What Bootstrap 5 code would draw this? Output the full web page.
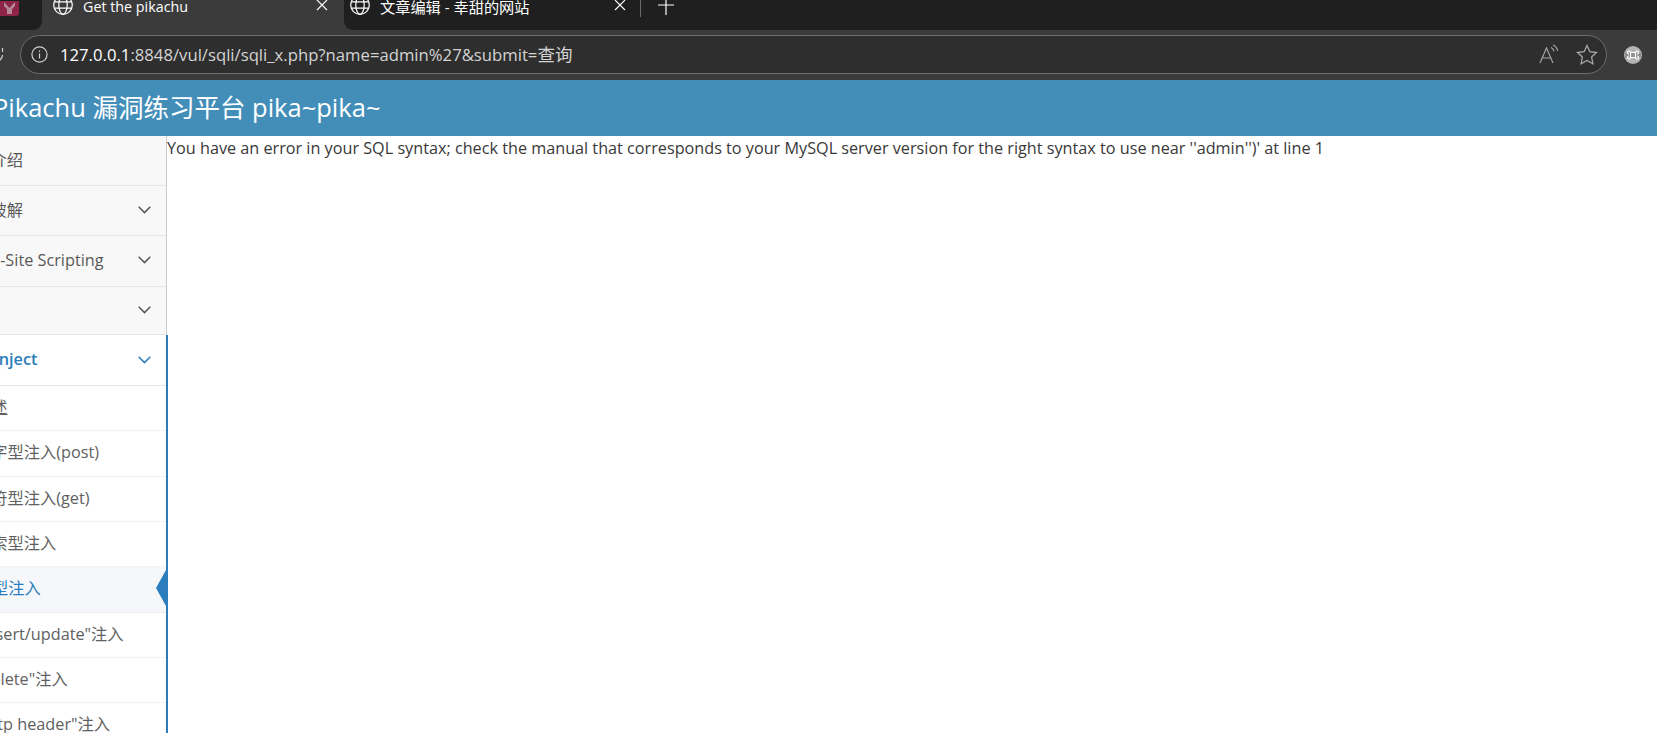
<!DOCTYPE html>
<html lang="zh-CN">
<head>
  <meta charset="UTF-8">
  <meta name="viewport" content="width=device-width, initial-scale=1.0">
  <title>Get the pikachu</title>
  <link href="https://cdn.jsdelivr.net/npm/bootstrap@5.3.0/dist/css/bootstrap.min.css" rel="stylesheet">
  <style>
    html, body { height: 100%; overflow: hidden; }
    body { font-family: "Open Sans", "Noto Sans CJK SC", sans-serif; font-size: 16.25px; color: #393939; background: #fff; }

    /* browser chrome */
    .tab-strip { height: 30px; background: #3b3b3b; overflow: hidden; color: #fff; font-size: 14.3px; line-height: 14px; }
    .strip-tab { height: 30px; flex: none; }
    .tab-pinned { width: 42px; background: #1f1f1f; border-bottom-right-radius: 9px; }
    .tab-current { width: 302px; padding-left: 11px; padding-right: 16px; }
    .tab-other { width: 296px; padding-left: 6px; padding-right: 14px; background: #1f1f1f; border-bottom-left-radius: 9px; font-size: 15.2px; }
    .tab-rest { background: #1f1f1f; }
    .tab-line { height: 10px; }
    .tab-title { margin-left: 10px; margin-top: 3px; }
    .tab-split { width: 1px; height: 17px; background: #6a6a6a; }
    .tool-strip { height: 50px; background: #3b3b3b; padding: 5px 15px 5px 20px; }
    .addr-box { height: 39px; width: 1587px; flex: none; border: 1px solid #6d6d6d; border-radius: 20px; background: #2e2e2e; padding: 0 8px 0 10px; color: #fff; font-size: 16.7px; }
    .addr-dim { color: #d4d4d4; }
    .addr-cjk { font-size: 17.5px; }
    .addr-text { margin-left: 12px; }
    .reload-arc { position: absolute; left: 0; top: 17px; }

    /* page */
    .page-wrap { margin-left: -71px; }
    .top-bar { height: 56px; background: #438eb9; color: #fff; font-size: 25.5px; padding-left: 64px; padding-bottom: 2px; }
    .side-col { width: 238px; flex: none; }
    .side-top { background: #f8f8f8; border-right: 1px solid #ccc; }
    .side-low { width: 239px; border-right: 2px solid #2b7dbc; background: #fff; }
    .side-row { height: 50.2px; border-bottom: 1px solid #e5e5e5; padding-left: 29px; padding-right: 15px; padding-bottom: 1px; color: #585858; }
    .side-top .side-row:last-child { height: 48.6px; }
    .side-row-open { height: 51px; color: #2b7dbc; font-weight: 600; background: #fff; }
    .sub-row { height: 45.3px; border-bottom: 1px dotted #e4e4e4; padding-left: 46px; padding-bottom: 2px; color: #616161; position: relative; }
    .sub-row-hover { text-decoration: underline; }
    .sub-row-on { background: #f5f7fa; color: #2b7dbc; }
    .sub-row-on::after { content: ""; position: absolute; right: 0; top: 3px; border-style: solid; border-width: 18px 10px 18px 0; border-color: transparent #2b7dbc transparent transparent; }
    .err-text { font-size: 16.22px; line-height: 24px; white-space: nowrap; }
  </style>
</head>
<body>
  <div class="d-flex tab-strip">
    <div class="strip-tab tab-pinned">
      <svg width="19" height="15" viewBox="0 0 19 15"><rect x="-4" y="-4" width="23" height="19" rx="3" fill="#8e2549"/><path d="M4 1l5.500 6 5.500-6v4l-3 3v5H7V8L4 5z" fill="#b58a98"/></svg>
    </div>
    <div class="strip-tab tab-current">
      <div class="d-flex align-items-center tab-line">
        <svg width="20" height="20" viewBox="0 0 20 20" fill="none" stroke="#fff" stroke-width="1.200"><circle cx="10" cy="10" r="9.300"/><ellipse cx="10" cy="10" rx="4.200" ry="9.300"/><path d="M1.500 6.800h17M1.500 13.200h17"/></svg>
        <span class="tab-title flex-grow-1">Get the pikachu</span>
        <svg width="12" height="12" viewBox="0 0 12 12" stroke="#fff" stroke-width="1.100"><path d="M1 1l10 10M11 1L1 11"/></svg>
      </div>
    </div>
    <div class="strip-tab tab-other">
      <div class="d-flex align-items-center tab-line">
        <svg width="20" height="20" viewBox="0 0 20 20" fill="none" stroke="#fff" stroke-width="1.200"><circle cx="10" cy="10" r="9.300"/><ellipse cx="10" cy="10" rx="4.200" ry="9.300"/><path d="M1.500 6.800h17M1.500 13.200h17"/></svg>
        <span class="tab-title flex-grow-1">文章编辑 - 幸甜的网站</span>
        <svg width="12" height="12" viewBox="0 0 12 12" stroke="#fff" stroke-width="1.100"><path d="M1 1l10 10M11 1L1 11"/></svg>
      </div>
    </div>
    <div class="flex-grow-1 tab-rest d-flex">
      <div class="tab-split"></div>
      <svg class="ms-3" width="18" height="16" viewBox="0 0 18 16" stroke="#fff" stroke-width="1.200"><path d="M9 -2v17M1 5h16"/></svg>
    </div>
  </div>

  <div class="d-flex tool-strip position-relative">
    <svg class="reload-arc" width="4" height="16" viewBox="0 0 4 16" fill="none" stroke="#d0d0d0" stroke-width="1.200"><path d="M-4 14.500a7 7 0 0 0 6.500-6.500M2.500 1v4"/></svg>
    <div class="d-flex align-items-center addr-box">
      <svg width="17" height="17" viewBox="0 0 17 17" fill="none" stroke="#cfcfcf" stroke-width="1.200"><circle cx="8.500" cy="8.500" r="7.600"/><path d="M8.500 7.500v5M8.500 4.400v1.600"/></svg>
      <span class="addr-text flex-grow-1"><span>127.0.0.1</span><span class="addr-dim">:8848/vul/sqli/sqli_x.php?name=admin%27&amp;submit=<span class="addr-cjk">查询</span></span></span>
      <svg width="21" height="21" viewBox="0 0 21 21" fill="none" stroke="#a8a8a8" stroke-width="1.100"><path d="M1 19L7.500 4 14 19M3.200 14h8.600M12 3.500c1.600.7 2.600 2 3 3.800M14 1c2.400 1 4 3 4.600 5.800"/></svg>
      <svg class="ms-3" width="22" height="21" viewBox="0 0 22 21" fill="none" stroke="#a8a8a8" stroke-width="1.300"><path d="M11 1.500l2.900 6.200 6.600.8-4.900 4.600 1.300 6.600L11 16.400l-5.900 3.300 1.300-6.600L1.500 8.500l6.600-.8z"/></svg>
    </div>
    <svg class="ms-auto align-self-center" width="18" height="18" viewBox="0 0 18 18" fill="none"><circle cx="9" cy="9" r="9" fill="#b4b4b4"/><path d="M1 9h16" stroke="#8d8d8d" stroke-width="5"/><path d="M6.500 6.500h5v5h-5zM6.500 6.500a1.500 1.500 0 1 0-1.500 1.500M11.500 6.500a1.500 1.500 0 1 1 1.500 1.500M6.500 11.500a1.500 1.500 0 1 1-1.500-1.500M11.500 11.500a1.500 1.500 0 1 0 1.500-1.500" stroke="#fff" stroke-width="1.200"/></svg>
  </div>

  <div class="page-wrap">
    <div class="d-flex align-items-center top-bar">Pikachu 漏洞练习平台 pika~pika~</div>
    <div class="d-flex">
      <div class="side-col">
        <ul class="list-unstyled mb-0 side-top">
          <li class="d-flex align-items-center justify-content-between side-row">系统介绍</li>
          <li class="d-flex align-items-center justify-content-between side-row">暴力破解
            <svg width="13" height="8" viewBox="0 0 13 8" fill="none" stroke="currentColor" stroke-width="1.500"><path d="M.7 .8l5.800 5.800 5.800-5.800"/></svg></li>
          <li class="d-flex align-items-center justify-content-between side-row">Cross-Site Scripting
            <svg width="13" height="8" viewBox="0 0 13 8" fill="none" stroke="currentColor" stroke-width="1.500"><path d="M.7 .8l5.800 5.800 5.800-5.800"/></svg></li>
          <li class="d-flex align-items-center justify-content-between side-row">CSRF
            <svg width="13" height="8" viewBox="0 0 13 8" fill="none" stroke="currentColor" stroke-width="1.500"><path d="M.7 .8l5.800 5.800 5.800-5.800"/></svg></li>
        </ul>
        <ul class="list-unstyled mb-0 side-low">
          <li class="d-flex align-items-center justify-content-between side-row side-row-open">SQL-Inject
            <svg width="13" height="8" viewBox="0 0 13 8" fill="none" stroke="currentColor" stroke-width="1.500"><path d="M.7 .8l5.800 5.800 5.800-5.800"/></svg></li>
          <li class="d-flex align-items-center sub-row sub-row-hover">概述</li>
          <li class="d-flex align-items-center sub-row">数字型注入(post)</li>
          <li class="d-flex align-items-center sub-row">字符型注入(get)</li>
          <li class="d-flex align-items-center sub-row">搜索型注入</li>
          <li class="d-flex align-items-center sub-row sub-row-on">xx型注入</li>
          <li class="d-flex align-items-center sub-row">"insert/update"注入</li>
          <li class="d-flex align-items-center sub-row">"delete"注入</li>
          <li class="d-flex align-items-center sub-row">"http header"注入</li>
        </ul>
      </div>
      <div class="flex-grow-1 err-text">You have an error in your SQL syntax; check the manual that corresponds to your MySQL server version for the right syntax to use near ''admin'')' at line 1</div>
    </div>
  </div>
  <script src="https://cdn.jsdelivr.net/npm/bootstrap@5.3.0/dist/js/bootstrap.bundle.min.js"></script>
</body>
</html>
